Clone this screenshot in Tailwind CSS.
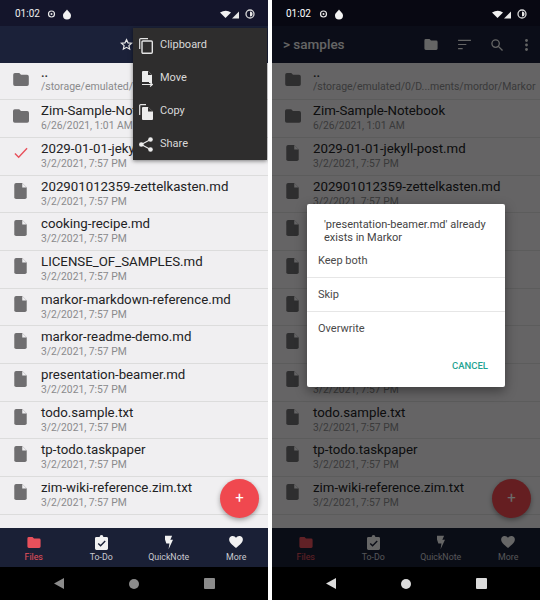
<!DOCTYPE html>
<html><head><meta charset="utf-8"><script src="https://cdn.jsdelivr.net/npm/@tailwindcss/browser@4"></script></head>
<body class="m-0 bg-white">
<svg width="0" height="0" class="absolute">
<defs>
<symbol id="folder" viewBox="0 0 18 15"><path d="M2 0h5l2 2h7a2 2 0 0 1 2 2v9a2 2 0 0 1-2 2H2a2 2 0 0 1-2-2V2a2 2 0 0 1 2-2z" fill="currentColor"/></symbol>
<symbol id="file" viewBox="0 0 14 18"><path d="M2 0h7l5 5v11a2 2 0 0 1-2 2H2a2 2 0 0 1-2-2V2a2 2 0 0 1 2-2z" fill="currentColor"/><path d="M9 0v5h5z" fill="#f0eff1"/></symbol>
<symbol id="status" viewBox="0 0 268 26">
<circle cx="51.500" cy="14" r="3" fill="none" stroke="#e8e8e8" stroke-width="1.200"/><circle cx="51.500" cy="14" r="1" fill="#e8e8e8"/>
<path d="M67 9.500c2 3 4 3.500 4 6a4 4 0 0 1-8 0c0-2.500 2-3 4-6z" fill="#f2f2f2"/>
<path d="M220 12.500q6-3.500 11 0l-5.500 5.500z" fill="#f2f2f2"/>
<path d="M239 11.500v7h-7z" fill="#e8e8e8"/>
<circle cx="250" cy="14" r="4" fill="none" stroke="#d8d8d8" stroke-width="1.300"/><path d="M250 11.500a2.500 2.500 0 0 1 0 5z" fill="#e8e8e8"/>
</symbol>
<symbol id="todo" viewBox="0 0 14 16"><path d="M1.500 2H5a2 2 0 0 1 4 0h3.500A1.500 1.500 0 0 1 14 3.500v11a1.500 1.500 0 0 1-1.500 1.500h-11A1.500 1.500 0 0 1 0 14.500v-11A1.500 1.500 0 0 1 1.500 2z" fill="currentColor"/><path d="M3.500 9l2.500 2.500 5-5" fill="none" stroke="#1a2036" stroke-width="1.500"/></symbol>
<symbol id="bolt" viewBox="0 0 9 15"><path d="M0 0h8L6 4.500h3L4 15l1-6.500H1.500L0 4z" fill="currentColor"/></symbol>
<symbol id="heart" viewBox="0 0 16 14"><path d="M8 14C3 10 0 7.500 0 4.200A4 4 0 0 1 4.200 0 4.500 4.500 0 0 1 8 2a4.500 4.500 0 0 1 3.800-2A4 4 0 0 1 16 4.200C16 7.500 13 10 8 14z" fill="currentColor"/></symbol>
</defs>
</svg>
<div class="flex w-[540px] h-[600px] justify-between font-['Roboto',sans-serif]">

<!-- LEFT PHONE -->
<div class="relative w-[268px] h-[600px] flex flex-col bg-[#f0eff1] overflow-hidden">
  <div class="relative h-[26px] bg-[#14152b] shrink-0">
    <span class="absolute left-[15px] top-[6px] text-[10px] leading-[16px] text-[#eeeeee]">01:02</span>
    <svg class="absolute inset-0" width="268" height="26"><use href="#status"/></svg>
  </div>
  <div class="relative h-[37px] bg-[#1b2139] shrink-0">
    <svg class="absolute left-[120px] top-[12px]" width="13" height="13" viewBox="0 0 24 24"><path d="M12 3l2.800 6 6.600.700-5 4.400 1.400 6.500L12 17.200l-5.800 3.400 1.400-6.500-5-4.400 6.600-.700z" fill="none" stroke="#e8e8e8" stroke-width="2.200"/></svg>
  </div>
  <div class="flex-1 min-h-0 flex flex-col text-[13.250px] leading-[17px] text-[#222224] whitespace-nowrap">
    <div class="h-[37px] flex border-b border-[#dcdcdc] shrink-0 pt-[3px]">
      <div class="w-[41px] pt-[7px] pl-[13px] text-[#6f6e70]"><svg width="16" height="13" class="block"><use href="#folder"/></svg></div>
      <div class="min-w-0 flex-1 overflow-hidden">
        <div class="text-[13px] leading-[14px] font-medium text-[#333]">..</div>
        <div class="text-[10.500px] leading-[14px] text-[#8a8a8c]">/storage/emulated/0/D...ments/mordor/Markor</div>
      </div>
    </div>
    <div class="h-[38px] flex border-b border-[#dcdcdc] shrink-0"><div class="w-[41px] pt-[9px] pl-[13px] text-[#6f6e70]"><svg width="16" height="14" class="block"><use href="#folder"/></svg></div><div class="min-w-0"><div class="h-[17px] pt-[2px]">Zim-Sample-Notebook</div><div class="text-[10.300px] text-[#8a8a8c]">6/26/2021, 1:01 AM</div></div></div>
    <div class="h-[38px] flex border-b border-[#dcdcdc] shrink-0"><div class="w-[41px] pt-[9px] pl-[14px]"><svg width="14" height="12" viewBox="0 0 15 12" class="block"><path d="M1 6.500l4 4L14 1" fill="none" stroke="#e8505b" stroke-width="1.500"/></svg></div><div class="min-w-0"><div class="h-[17px] pt-[2px]">2029-01-01-jekyll-post.md</div><div class="text-[10.300px] text-[#8a8a8c]">3/2/2021, 7:57 PM</div></div></div>
    <div class="h-[37px] flex border-b border-[#dcdcdc] shrink-0"><div class="w-[41px] pt-[7px] pl-[14px] text-[#6f6e70]"><svg width="13" height="16" class="block"><use href="#file"/></svg></div><div class="min-w-0"><div class="h-[17px] pt-[2px]">202901012359-zettelkasten.md</div><div class="text-[10.300px] text-[#8a8a8c]">3/2/2021, 7:57 PM</div></div></div>
    <div class="h-[38px] flex border-b border-[#dcdcdc] shrink-0"><div class="w-[41px] pt-[7px] pl-[14px] text-[#6f6e70]"><svg width="13" height="16" class="block"><use href="#file"/></svg></div><div class="min-w-0"><div class="h-[17px] pt-[2px]">cooking-recipe.md</div><div class="text-[10.300px] text-[#8a8a8c]">3/2/2021, 7:57 PM</div></div></div>
    <div class="h-[38px] flex border-b border-[#dcdcdc] shrink-0"><div class="w-[41px] pt-[7px] pl-[14px] text-[#6f6e70]"><svg width="13" height="16" class="block"><use href="#file"/></svg></div><div class="min-w-0"><div class="h-[17px] pt-[2px]">LICENSE_OF_SAMPLES.md</div><div class="text-[10.300px] text-[#8a8a8c]">3/2/2021, 7:57 PM</div></div></div>
    <div class="h-[37px] flex border-b border-[#dcdcdc] shrink-0"><div class="w-[41px] pt-[7px] pl-[14px] text-[#6f6e70]"><svg width="13" height="16" class="block"><use href="#file"/></svg></div><div class="min-w-0"><div class="h-[17px] pt-[2px]">markor-markdown-reference.md</div><div class="text-[10.300px] text-[#8a8a8c]">3/2/2021, 7:57 PM</div></div></div>
    <div class="h-[38px] flex border-b border-[#dcdcdc] shrink-0"><div class="w-[41px] pt-[7px] pl-[14px] text-[#6f6e70]"><svg width="13" height="16" class="block"><use href="#file"/></svg></div><div class="min-w-0"><div class="h-[17px] pt-[2px]">markor-readme-demo.md</div><div class="text-[10.300px] text-[#8a8a8c]">3/2/2021, 7:57 PM</div></div></div>
    <div class="h-[38px] flex border-b border-[#dcdcdc] shrink-0"><div class="w-[41px] pt-[7px] pl-[14px] text-[#6f6e70]"><svg width="13" height="16" class="block"><use href="#file"/></svg></div><div class="min-w-0"><div class="h-[17px] pt-[2px]">presentation-beamer.md</div><div class="text-[10.300px] text-[#8a8a8c]">3/2/2021, 7:57 PM</div></div></div>
    <div class="h-[37px] flex border-b border-[#dcdcdc] shrink-0"><div class="w-[41px] pt-[7px] pl-[14px] text-[#6f6e70]"><svg width="13" height="16" class="block"><use href="#file"/></svg></div><div class="min-w-0"><div class="h-[17px] pt-[2px]">todo.sample.txt</div><div class="text-[10.300px] text-[#8a8a8c]">3/2/2021, 7:57 PM</div></div></div>
    <div class="h-[38px] flex border-b border-[#dcdcdc] shrink-0"><div class="w-[41px] pt-[7px] pl-[14px] text-[#6f6e70]"><svg width="13" height="16" class="block"><use href="#file"/></svg></div><div class="min-w-0"><div class="h-[17px] pt-[2px]">tp-todo.taskpaper</div><div class="text-[10.300px] text-[#8a8a8c]">3/2/2021, 7:57 PM</div></div></div>
    <div class="h-[38px] flex border-b border-[#dcdcdc] shrink-0"><div class="w-[41px] pt-[7px] pl-[14px] text-[#6f6e70]"><svg width="13" height="16" class="block"><use href="#file"/></svg></div><div class="min-w-0"><div class="h-[17px] pt-[2px]">zim-wiki-reference.zim.txt</div><div class="text-[10.300px] text-[#8a8a8c]">3/2/2021, 7:57 PM</div></div></div>
  </div>
  <div class="grid grid-cols-4 w-[270px] h-[39px] bg-[#1a2036] shrink-0 text-[8.800px] leading-[12px] text-[#c9cad0] text-center">
    <div class="flex flex-col items-center justify-end pb-[4px] text-[#e8505b]"><svg width="14" height="11" class="mb-[3px]"><use href="#folder"/></svg>Files</div>
    <div class="flex flex-col items-center justify-end pb-[4px]"><svg width="13" height="15" class="mb-[1px] text-[#f2f2f2]"><use href="#todo"/></svg>To-Do</div>
    <div class="flex flex-col items-center justify-end pb-[4px]"><svg width="8" height="15" class="mb-[1px] text-[#f2f2f2]"><use href="#bolt"/></svg>QuickNote</div>
    <div class="flex flex-col items-center justify-end pb-[4px]"><svg width="14" height="12" class="mb-[3px] text-[#f2f2f2]"><use href="#heart"/></svg>More</div>
  </div>
  <div class="flex justify-between items-center h-[33px] bg-black pl-[54px] pr-[53px] shrink-0">
    <svg width="10" height="11" viewBox="0 0 11 12"><path d="M11 0v12L0 6z" fill="#8b8b8b"/></svg>
    <div class="w-[10px] h-[10px] rounded-full bg-[#8b8b8b]"></div>
    <div class="w-[11px] h-[11px] rounded-[1px] bg-[#8b8b8b]"></div>
  </div>
  <div class="absolute left-[220px] top-[479px] w-[39px] h-[39px] rounded-full bg-[#f0484f] shadow-[0_2px_5px_rgba(0,0,0,.35)] flex items-center justify-center text-white text-[15px] leading-none">+</div>
  <!-- popup menu -->
  <div class="absolute left-[133px] top-[28px] w-[134px] h-[132px] pt-[1px] bg-[#2e2d2d] shadow-[0_1px_4px_rgba(0,0,0,.5)] flex flex-col text-[11px] text-[#d9d9d9]">
    <div class="h-[33px] shrink-0 flex items-center gap-[7px] pl-[6px]"><svg width="14" height="16" viewBox="0 0 14 16"><path d="M.7 11V1.600a1 1 0 0 1 1-1H9" fill="none" stroke="#e4e4e4" stroke-width="1.200"/><rect x="3" y="3" width="10.300" height="12.300" rx="1" fill="none" stroke="#e4e4e4" stroke-width="1.400"/></svg><span>Clipboard</span></div>
    <div class="h-[33px] shrink-0 flex items-center gap-[7px] pl-[6px]"><svg width="14" height="16" viewBox="0 0 14 16"><path d="M4 0h5l4 4v8H10v-1H3V1a1 1 0 0 1 1-1z" fill="#ececec"/><path d="M9 0v4h4z" fill="#2e2d2d"/><path d="M3 13.500h10m-2-2l2.500 2-2.500 2" fill="none" stroke="#ececec" stroke-width="1.100"/></svg><span>Move</span></div>
    <div class="h-[33px] shrink-0 flex items-center gap-[7px] pl-[6px]"><svg width="14" height="16" viewBox="0 0 14 16"><path d="M.7 11V1.600a1 1 0 0 1 1-1H7" fill="none" stroke="#e4e4e4" stroke-width="1.200"/><path d="M4 3h5l5 4.500V15a1 1 0 0 1-1 1H4a1 1 0 0 1-1-1V4a1 1 0 0 1 1-1z" fill="#ececec"/><path d="M9 3v4.500h5z" fill="#2e2d2d"/></svg><span>Copy</span></div>
    <div class="h-[33px] shrink-0 flex items-center gap-[7px] pl-[6px]"><svg width="14" height="15" viewBox="0 0 14 15"><circle cx="11.500" cy="2.500" r="2.300" fill="#ececec"/><circle cx="2.300" cy="7.500" r="2.300" fill="#ececec"/><circle cx="11.500" cy="12.500" r="2.300" fill="#ececec"/><path d="M11.500 2.500L2.300 7.500l9.200 5" fill="none" stroke="#ececec" stroke-width="1.100"/></svg><span>Share</span></div>
  </div>
</div>

<!-- RIGHT PHONE -->
<div class="relative w-[268px] h-[600px] flex flex-col bg-[#f0eff1] overflow-hidden">
  <div class="h-[26px] bg-[#14152b] shrink-0"></div>
  <div class="relative h-[37px] bg-[#1b2139] shrink-0 flex items-center justify-between pl-[11px] pr-[12px]">
    <span class="text-[13.500px] font-medium text-[#f0f0f0]">&gt; samples</span>
    <div class="flex items-center gap-[20px]">
      <svg width="14" height="11"><use href="#folder" class="text-[#f0f0f0]"/></svg>
      <svg width="13" height="11" viewBox="0 0 14 12"><path d="M0 1.500h14M0 6h9M0 10.500h5" stroke="#f0f0f0" stroke-width="1.300" fill="none"/></svg>
      <svg width="12" height="12" viewBox="0 0 13 13"><circle cx="5" cy="5" r="4" fill="none" stroke="#f0f0f0" stroke-width="1.400"/><path d="M8 8l4.500 4.500" stroke="#f0f0f0" stroke-width="1.500"/></svg>
      <svg width="3" height="12" viewBox="0 0 3 12" class="ml-[2px]"><circle cx="1.500" cy="1.500" r="1.400" fill="#f0f0f0"/><circle cx="1.500" cy="6" r="1.400" fill="#f0f0f0"/><circle cx="1.500" cy="10.500" r="1.400" fill="#f0f0f0"/></svg>
    </div>
  </div>
  <div class="flex-1 min-h-0 flex flex-col text-[13.250px] leading-[17px] text-[#222224] whitespace-nowrap">
    <div class="h-[37px] flex border-b border-[#dcdcdc] shrink-0 pt-[3px]">
      <div class="w-[41px] pt-[7px] pl-[13px] text-[#6f6e70]"><svg width="16" height="13" class="block"><use href="#folder"/></svg></div>
      <div class="min-w-0 flex-1 overflow-hidden">
        <div class="text-[13px] leading-[14px] font-medium text-[#333]">..</div>
        <div class="text-[10.500px] leading-[14px] text-[#8a8a8c]">/storage/emulated/0/D...ments/mordor/Markor</div>
      </div>
    </div>
    <div class="h-[38px] flex border-b border-[#dcdcdc] shrink-0"><div class="w-[41px] pt-[9px] pl-[13px] text-[#6f6e70]"><svg width="16" height="14" class="block"><use href="#folder"/></svg></div><div class="min-w-0"><div class="h-[17px] pt-[2px]">Zim-Sample-Notebook</div><div class="text-[10.300px] text-[#8a8a8c]">6/26/2021, 1:01 AM</div></div></div>
    <div class="h-[38px] flex border-b border-[#dcdcdc] shrink-0"><div class="w-[41px] pt-[7px] pl-[14px] text-[#6f6e70]"><svg width="13" height="16" class="block"><use href="#file"/></svg></div><div class="min-w-0"><div class="h-[17px] pt-[2px]">2029-01-01-jekyll-post.md</div><div class="text-[10.300px] text-[#8a8a8c]">3/2/2021, 7:57 PM</div></div></div>
    <div class="h-[37px] flex border-b border-[#dcdcdc] shrink-0"><div class="w-[41px] pt-[7px] pl-[14px] text-[#6f6e70]"><svg width="13" height="16" class="block"><use href="#file"/></svg></div><div class="min-w-0"><div class="h-[17px] pt-[2px]">202901012359-zettelkasten.md</div><div class="text-[10.300px] text-[#8a8a8c]">3/2/2021, 7:57 PM</div></div></div>
    <div class="h-[38px] flex border-b border-[#dcdcdc] shrink-0"><div class="w-[41px] pt-[7px] pl-[14px] text-[#6f6e70]"><svg width="13" height="16" class="block"><use href="#file"/></svg></div><div class="min-w-0"><div class="h-[17px] pt-[2px]">cooking-recipe.md</div><div class="text-[10.300px] text-[#8a8a8c]">3/2/2021, 7:57 PM</div></div></div>
    <div class="h-[38px] flex border-b border-[#dcdcdc] shrink-0"><div class="w-[41px] pt-[7px] pl-[14px] text-[#6f6e70]"><svg width="13" height="16" class="block"><use href="#file"/></svg></div><div class="min-w-0"><div class="h-[17px] pt-[2px]">LICENSE_OF_SAMPLES.md</div><div class="text-[10.300px] text-[#8a8a8c]">3/2/2021, 7:57 PM</div></div></div>
    <div class="h-[37px] flex border-b border-[#dcdcdc] shrink-0"><div class="w-[41px] pt-[7px] pl-[14px] text-[#6f6e70]"><svg width="13" height="16" class="block"><use href="#file"/></svg></div><div class="min-w-0"><div class="h-[17px] pt-[2px]">markor-markdown-reference.md</div><div class="text-[10.300px] text-[#8a8a8c]">3/2/2021, 7:57 PM</div></div></div>
    <div class="h-[38px] flex border-b border-[#dcdcdc] shrink-0"><div class="w-[41px] pt-[7px] pl-[14px] text-[#6f6e70]"><svg width="13" height="16" class="block"><use href="#file"/></svg></div><div class="min-w-0"><div class="h-[17px] pt-[2px]">markor-readme-demo.md</div><div class="text-[10.300px] text-[#8a8a8c]">3/2/2021, 7:57 PM</div></div></div>
    <div class="h-[38px] flex border-b border-[#dcdcdc] shrink-0"><div class="w-[41px] pt-[7px] pl-[14px] text-[#6f6e70]"><svg width="13" height="16" class="block"><use href="#file"/></svg></div><div class="min-w-0"><div class="h-[17px] pt-[2px]">presentation-beamer.md</div><div class="text-[10.300px] text-[#8a8a8c]">3/2/2021, 7:57 PM</div></div></div>
    <div class="h-[37px] flex border-b border-[#dcdcdc] shrink-0"><div class="w-[41px] pt-[7px] pl-[14px] text-[#6f6e70]"><svg width="13" height="16" class="block"><use href="#file"/></svg></div><div class="min-w-0"><div class="h-[17px] pt-[2px]">todo.sample.txt</div><div class="text-[10.300px] text-[#8a8a8c]">3/2/2021, 7:57 PM</div></div></div>
    <div class="h-[38px] flex border-b border-[#dcdcdc] shrink-0"><div class="w-[41px] pt-[7px] pl-[14px] text-[#6f6e70]"><svg width="13" height="16" class="block"><use href="#file"/></svg></div><div class="min-w-0"><div class="h-[17px] pt-[2px]">tp-todo.taskpaper</div><div class="text-[10.300px] text-[#8a8a8c]">3/2/2021, 7:57 PM</div></div></div>
    <div class="h-[38px] flex border-b border-[#dcdcdc] shrink-0"><div class="w-[41px] pt-[7px] pl-[14px] text-[#6f6e70]"><svg width="13" height="16" class="block"><use href="#file"/></svg></div><div class="min-w-0"><div class="h-[17px] pt-[2px]">zim-wiki-reference.zim.txt</div><div class="text-[10.300px] text-[#8a8a8c]">3/2/2021, 7:57 PM</div></div></div>
  </div>
  <div class="grid grid-cols-4 w-[270px] h-[39px] bg-[#1a2036] shrink-0 text-[8.800px] leading-[12px] text-[#c9cad0] text-center">
    <div class="flex flex-col items-center justify-end pb-[4px] text-[#e8505b]"><svg width="14" height="11" class="mb-[3px]"><use href="#folder"/></svg>Files</div>
    <div class="flex flex-col items-center justify-end pb-[4px]"><svg width="13" height="15" class="mb-[1px] text-[#f2f2f2]"><use href="#todo"/></svg>To-Do</div>
    <div class="flex flex-col items-center justify-end pb-[4px]"><svg width="8" height="15" class="mb-[1px] text-[#f2f2f2]"><use href="#bolt"/></svg>QuickNote</div>
    <div class="flex flex-col items-center justify-end pb-[4px]"><svg width="14" height="12" class="mb-[3px] text-[#f2f2f2]"><use href="#heart"/></svg>More</div>
  </div>
  <div class="h-[33px] bg-black shrink-0"></div>
  <div class="absolute left-[220px] top-[479px] w-[39px] h-[39px] rounded-full bg-[#f0484f] shadow-[0_2px_5px_rgba(0,0,0,.35)] flex items-center justify-center text-white text-[15px] leading-none">+</div>
  <!-- scrim -->
  <div class="absolute inset-0 bg-black/58"></div>
  <!-- status bar and nav bar stay bright above the scrim -->
  <span class="absolute left-[14px] top-[6px] text-[10px] leading-[16px] text-white">01:02</span>
  <svg class="absolute left-0 top-0" width="268" height="26"><use href="#status"/></svg>
  <div class="absolute left-0 right-0 bottom-0 flex justify-between items-center h-[33px] pl-[54px] pr-[53px]">
    <svg width="10" height="11" viewBox="0 0 11 12"><path d="M11 0v12L0 6z" fill="#dcdcdc"/></svg>
    <div class="w-[10px] h-[10px] rounded-full bg-[#dcdcdc]"></div>
    <div class="w-[11px] h-[11px] rounded-[1px] bg-[#dcdcdc]"></div>
  </div>
  <!-- dialog -->
  <div class="absolute left-[35px] top-[204px] w-[198px] h-[183px] bg-white rounded-[2px] shadow-[0_4px_12px_rgba(0,0,0,.4)] flex flex-col text-[11px] text-[#4a4a4a]">
    <div class="h-[40px] pl-[17px] pt-[14px] leading-[13px] text-[#444] whitespace-nowrap">'presentation-beamer.md' already<br>exists in Markor</div>
    <div class="h-[34px] pl-[11px] pt-[1px] flex items-center border-b border-[#e6e6e6]">Keep both</div>
    <div class="h-[34px] pl-[11px] pt-[1px] flex items-center border-b border-[#e6e6e6]">Skip</div>
    <div class="h-[34px] pl-[11px] pt-[1px] flex items-center">Overwrite</div>
    <div class="flex-1 flex items-center justify-end pr-[17px] text-[9.500px] font-medium text-[#1fa392]">CANCEL</div>
  </div>
</div>
</div>
</body></html>
